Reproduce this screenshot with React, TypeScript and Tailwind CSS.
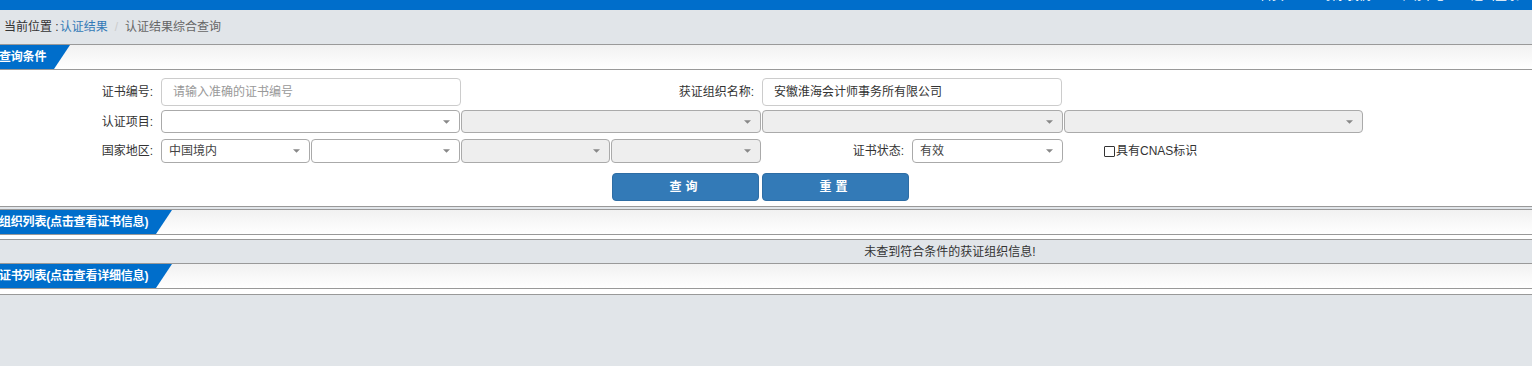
import React from 'react'

const Arrow = () => (
  <svg className="w-[7px] h-[4px]" viewBox="0 0 8 4">
    <path d="M0 0h8L4 4z" fill="#888" />
  </svg>
)

interface SelectProps {
  width: string
  value?: string
  disabled?: boolean
}

function FakeSelect({ width, value, disabled }: SelectProps) {
  return (
    <div
      className={`${width} h-full flex items-center justify-between rounded-[4px] border border-[#aaa] pl-[7px] pr-[9px] ${
        disabled ? 'bg-[#eeeeee]' : 'bg-white'
      }`}
    >
      <span className="text-[12px] text-[#444]">{value}</span>
      <Arrow />
    </div>
  )
}

function SectionHeader({ title, tabWidth }: { title: string; tabWidth: string }) {
  return (
    <div className="h-[26px] border-y border-[#999] bg-gradient-to-b from-[#f1f1f1] to-white flex">
      <div
        className={`${tabWidth} h-full bg-[#006ecb] text-white font-bold text-[12px] flex items-center whitespace-nowrap overflow-hidden [clip-path:polygon(0_0,100%_0,calc(100%-16px)_100%,0_100%)]`}
      >
        <span className="-ml-[1px] tracking-[-0.2px]">{title}</span>
      </div>
    </div>
  )
}

export default function App() {
  return (
    <div className="w-[1532px] h-[366px] overflow-hidden bg-[#e1e5e9] font-['Liberation_Sans','Noto_Sans_CJK_SC',sans-serif] text-[#333]">
      {/* top bar, links cut off above the fold */}
      <div className="h-[10px] bg-[#006ecb] overflow-hidden flex text-white text-[12px] leading-none">
        <span className="ml-[1260px] -mt-[10px]">首页</span>
        <span className="ml-[39px] -mt-[10px]">联系我们</span>
        <span className="ml-[27px] -mt-[10px]">帮助中心</span>
        <span className="ml-[25px] -mt-[10px]">退出登录</span>
      </div>

      {/* breadcrumb */}
      <div className="h-[34px] flex items-center pl-[4px] text-[12px]">
        <span className="text-[#333]">当前位置 :</span>
        <span className="ml-[1px] text-[#337ab7]">认证结果</span>
        <span className="mx-[7px] text-[#ccc]">/</span>
        <span className="text-[#666]">认证结果综合查询</span>
      </div>

      <SectionHeader title="查询条件" tabWidth="w-[70px]" />

      {/* query form */}
      <div className="h-[137px] bg-white border-b border-[#999] text-[12px]">
        <div className="h-[8px]" />
        <div className="h-[28px] flex items-center">
          <div className="w-[153px] text-right">证书编号:</div>
          <div className="ml-[8px] w-[300px] h-full flex items-center rounded-[4px] border border-[#ccc] px-[11px] text-[#999]">
            请输入准确的证书编号
          </div>
          <div className="w-[293px] text-right">获证组织名称:</div>
          <div className="ml-[8px] w-[300px] h-full flex items-center rounded-[4px] border border-[#ccc] px-[11px] text-[#333]">
            安徽淮海会计师事务所有限公司
          </div>
        </div>

        <div className="mt-[4px] h-[23px] flex items-center">
          <div className="w-[153px] text-right">认证项目:</div>
          <div className="ml-[8px] h-full flex gap-[1px]">
            <FakeSelect width="w-[299px]" />
            <FakeSelect width="w-[300px]" disabled />
            <FakeSelect width="w-[301px]" disabled />
            <FakeSelect width="w-[299px]" disabled />
          </div>
        </div>

        <div className="mt-[6px] h-[24px] flex items-center">
          <div className="w-[153px] text-right">国家地区:</div>
          <div className="ml-[8px] h-full flex gap-[1px]">
            <FakeSelect width="w-[149px]" value="中国境内" />
            <FakeSelect width="w-[149px]" />
            <FakeSelect width="w-[149px]" disabled />
            <FakeSelect width="w-[150px]" disabled />
          </div>
          <div className="w-[143px] text-right">证书状态:</div>
          <div className="ml-[8px] h-full flex">
            <FakeSelect width="w-[151px]" value="有效" />
          </div>
          <div className="ml-[41px] flex items-center">
            <span className="w-[11px] h-[11px] border border-[#333] rounded-[1px] bg-white" />
            <span className="ml-[1px]">具有CNAS标识</span>
          </div>
        </div>

        <div className="mt-[10px] h-[28px] flex pl-[612px] gap-[3px]">
          <button className="w-[147px] h-full rounded-[4px] border border-[#2e6da4] bg-[#337ab7] text-white font-bold text-[12px] tracking-[4px]">
            查询
          </button>
          <button className="w-[147px] h-full rounded-[4px] border border-[#2e6da4] bg-[#337ab7] text-white font-bold text-[12px] tracking-[4px]">
            重置
          </button>
        </div>
      </div>

      <div className="h-[2px]" />

      <SectionHeader title="组织列表(点击查看证书信息)" tabWidth="w-[172px]" />
      <div className="h-[4px] bg-white" />
      <div className="h-[24px] border-t border-[#999] w-[1900px] flex items-center justify-center text-[12px] text-[#333]">
        未查到符合条件的获证组织信息!
      </div>

      <SectionHeader title="证书列表(点击查看详细信息)" tabWidth="w-[172px]" />
      <div className="h-[5px] bg-white" />
      <div className="border-t border-[#999]" />
    </div>
  )
}
